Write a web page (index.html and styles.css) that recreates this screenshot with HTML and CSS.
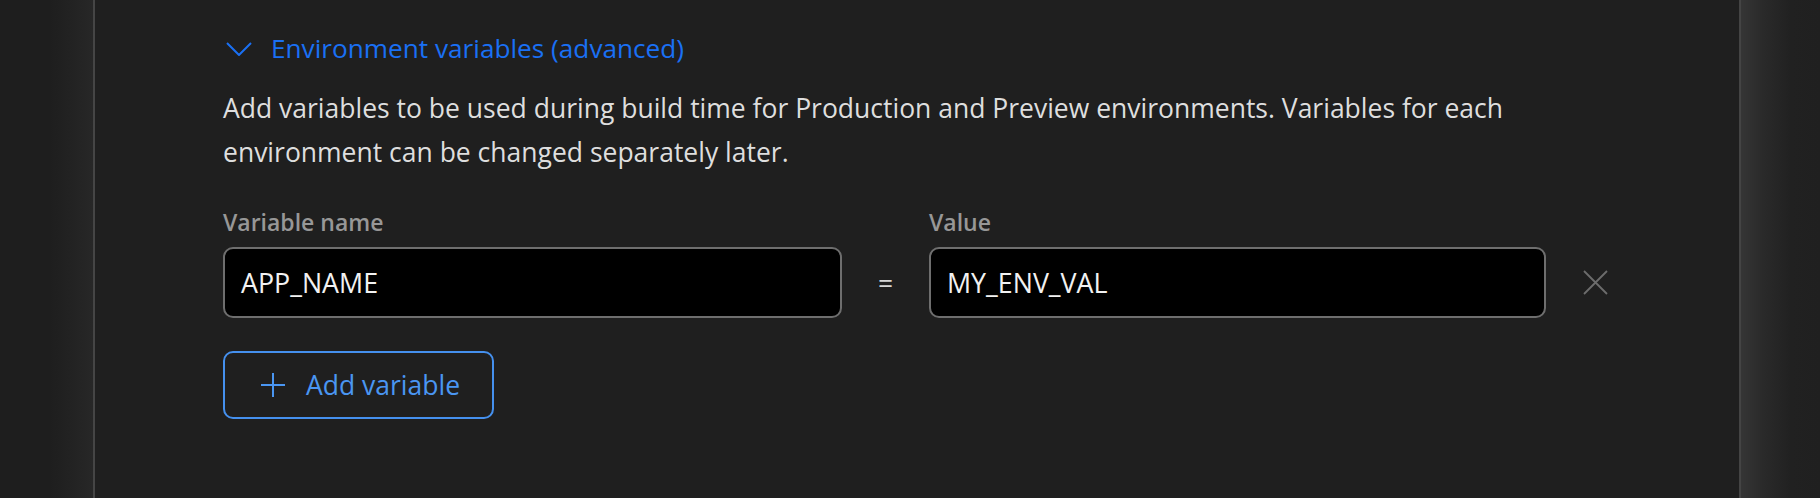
FILE: index.html
```html
<!DOCTYPE html>
<html lang="en">
<head>
<meta charset="utf-8">
<title>Environment variables</title>
<link rel="stylesheet" href="styles.css">
</head>
<body>
<div class="page">
  <div class="gutter gutter-left"></div>
  <main class="panel">
    <section class="env">
      <button class="disclosure" type="button">
        <svg class="chevron" width="26" height="14" viewBox="0 0 26 14" aria-hidden="true">
          <path d="M1 1 L13 13 L25 1" fill="none" stroke="currentColor" stroke-width="2"/>
        </svg>
        <span>Environment variables (advanced)</span>
      </button>
      <p class="desc">Add variables to be used during build time for Production and Preview environments. Variables for each environment can be changed separately later.</p>
      <div class="vars">
        <div class="field-label">Variable name</div>
        <div></div>
        <div class="field-label">Value</div>
        <div></div>
        <div class="input">APP_NAME</div>
        <div class="eq">=</div>
        <div class="input">MY_ENV_VAL</div>
        <button class="remove" type="button" aria-label="Remove">
          <svg width="25" height="25" viewBox="0 0 25 25" aria-hidden="true">
            <path d="M1 1 L24 24 M24 1 L1 24" fill="none" stroke="currentColor" stroke-width="1.8"/>
          </svg>
        </button>
      </div>
      <button class="add" type="button">
        <svg class="plus" width="24" height="24" viewBox="0 0 24 24" aria-hidden="true">
          <path d="M12 0 V24 M0 12 H24" fill="none" stroke="currentColor" stroke-width="2"/>
        </svg>
        <span>Add variable</span>
      </button>
    </section>
  </main>
  <div class="gutter gutter-right"></div>
</div>
</body>
</html>
```

FILE: styles.css
```css
* {
  box-sizing: border-box;
}

html, body {
  margin: 0;
  padding: 0;
  background: #1e1e1e;
}

body {
  font-family: "Open Sans", "Noto Sans", sans-serif;
  color: #dedede;
  overflow: hidden;
}

.page {
  display: flex;
  height: 498px;
}

.gutter-left {
  flex: none;
  width: 93px;
  background: linear-gradient(to right, #1e1e1e 0px, #1e1e1e 50px, #272727 93px);
}

.gutter-right {
  flex: 1;
  background: linear-gradient(to right, #353535 0px, #2a2a2a 22px, #212121 50px, #202020 79px);
}

.panel {
  flex: none;
  width: 1648px;
  background: #1f1f1f;
  border-left: 2px solid #454545;
  border-right: 2px solid #444444;
  padding: 28px 0 0 128px;
}

.env {
  display: flex;
  flex-direction: column;
  align-items: flex-start;
}

.disclosure {
  display: flex;
  align-items: center;
  gap: 19px;
  height: 40px;
  padding: 0 0 0 3px;
  margin: 0;
  border: 0;
  background: none;
  color: #1a70f4;
  font-family: inherit;
  font-size: 26.2px;
  line-height: 40px;
  cursor: pointer;
}

.chevron {
  display: block;
  flex: none;
  margin-top: 2px;
}

.desc {
  margin: 18px 0 0 0;
  width: 1320px;
  font-size: 26.5px;
  line-height: 44px;
  color: #dedede;
}

.vars {
  margin-top: 32px;
  display: grid;
  grid-template-columns: 619px 87px 617px auto;
  row-gap: 9px;
  align-items: center;
}

.field-label {
  font-size: 23px;
  line-height: 32px;
  font-weight: 600;
  color: #979797;
}

.input {
  height: 71px;
  display: flex;
  align-items: center;
  padding: 0 16px;
  background: #000000;
  border: 2px solid #6e6e6e;
  border-radius: 10px;
  font-size: 26.8px;
  color: #f2f2f2;
}

.eq {
  text-align: center;
  font-size: 26.5px;
  color: #d6d6d6;
}

.remove {
  display: block;
  margin: 0 0 0 37px;
  padding: 0;
  border: 0;
  background: none;
  color: #6c6c6c;
  line-height: 0;
  cursor: pointer;
}

.remove svg {
  display: block;
}

.add {
  margin-top: 33px;
  width: 271px;
  height: 68px;
  display: flex;
  align-items: center;
  gap: 21px;
  padding: 0 0 0 36px;
  background: none;
  border: 2px solid #4590ee;
  border-radius: 10px;
  color: #4a96f2;
  font-family: inherit;
  font-size: 26.5px;
  cursor: pointer;
}

.plus {
  display: block;
  flex: none;
}
```
